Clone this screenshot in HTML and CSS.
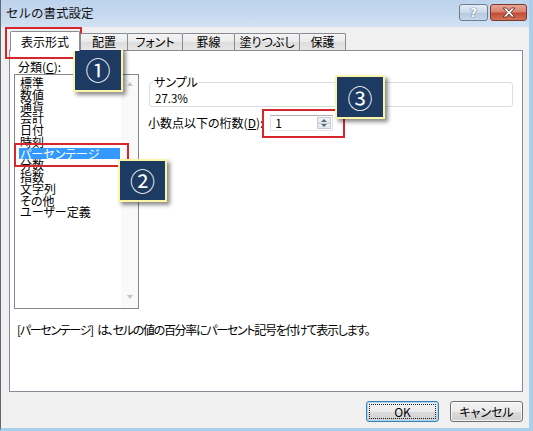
FILE: index.html
```html
<!DOCTYPE html>
<html lang="ja">
<head>
<meta charset="utf-8">
<title>セルの書式設定</title>
<link rel="stylesheet" href="styles.css">
</head>
<body>
<div class="window">
  <div class="titlebar">
    <span class="title">セルの書式設定</span>
    <div class="caption-buttons">
      <div class="cbtn help"><span class="qmark">?</span></div>
      <div class="cbtn close">
        <svg width="16" height="11" viewBox="0 0 16 11"><path d="M2 1h3.5L8 4 10.5 1H14L9.8 5.5 14 10h-3.5L8 7 5.5 10H2l4.2-4.5z" fill="#fff" stroke="#6b2a22" stroke-width="0.9" stroke-linejoin="round"/></svg>
      </div>
    </div>
  </div>
  <div class="body">
    <div class="tabs">
      <div class="tab selected">表示形式</div>
      <div class="tab">配置</div>
      <div class="tab">フォント</div>
      <div class="tab">罫線</div>
      <div class="tab">塗りつぶし</div>
      <div class="tab">保護</div>
    </div>
    <div class="panel">
      <div class="panel-main">
        <div class="left">
          <div class="label">分類(<u>C</u>):</div>
          <div class="listbox">
            <ul class="items">
              <li>標準</li>
              <li>数値</li>
              <li>通貨</li>
              <li>会計</li>
              <li>日付</li>
              <li>時刻</li>
              <li class="active">パーセンテージ</li>
              <li>分数</li>
              <li>指数</li>
              <li>文字列</li>
              <li>その他</li>
              <li>ユーザー定義</li>
            </ul>
            <div class="scrollbar">
              <span class="arrow up"></span>
              <span class="arrow down"></span>
            </div>
          </div>
        </div>
        <div class="right">
          <fieldset class="sample">
            <legend>サンプル</legend>
            <div class="sample-value">27.3%</div>
          </fieldset>
          <div class="decimals">
            <span class="dlabel">小数点以下の桁数(<u>D</u>):</span>
            <div class="spin">
              <span class="spin-value">1</span>
              <div class="spin-btns">
                <span class="sb"><span class="tri up"></span></span>
                <span class="sb"><span class="tri down"></span></span>
              </div>
            </div>
          </div>
        </div>
      </div>
      <p class="desc">[パーセンテージ] は、セルの値の百分率にパーセント記号を付けて表示します。</p>
    </div>
    <div class="buttons">
      <button class="btn default"><span class="focus">OK</span></button>
      <button class="btn">キャンセル</button>
    </div>
  </div>

  <div class="redbox r1"></div>
  <div class="redbox r2"></div>
  <div class="redbox r3"></div>
  <div class="callout c1">①</div>
  <div class="callout c2">②</div>
  <div class="callout c3">③</div>
</div>
</body>
</html>
```

FILE: styles.css
```css
* { box-sizing: border-box; margin: 0; padding: 0; }
html, body { width: 533px; height: 431px; overflow: hidden; }
body {
  font-family: "Noto Sans CJK JP", "Noto Sans", sans-serif;
  font-size: 12px;
  color: #000;
  background: #f0f0f0;
  font-feature-settings: "palt";
}
.window {
  position: relative;
  width: 533px;
  height: 431px;
  background: #f0f0f0;
  border-left: 1px solid #5c6977;
  border-right: 4px solid #a9cfea;
  border-bottom: 3px solid #a9cfea;
  display: flex;
  flex-direction: column;
}
.titlebar {
  height: 27px;
  flex: none;
  display: flex;
  align-items: flex-start;
  justify-content: space-between;
  background: linear-gradient(180deg, #bdd2ec 0%, #c6d9ef 55%, #d3e2f3 100%);
  padding: 0 2px 0 5px;
}
.title {
  font-size: 12.5px;
  line-height: 26px;
  font-feature-settings: normal;
  color: #111;
}
.caption-buttons { display: flex; gap: 2px; padding-top: 4px; }
.cbtn {
  height: 17px;
  border: 1px solid #6f7f93;
  border-radius: 3px;
  display: flex;
  align-items: center;
  justify-content: center;
}
.help {
  width: 29px;
  background: linear-gradient(180deg, #e3ebf5 0%, #cbd9ea 50%, #b6c8df 51%, #c6d6e9 100%);
}
.qmark {
  font-family: "DejaVu Sans", sans-serif;
  font-weight: bold;
  font-size: 12px;
  line-height: 1;
  color: #fff;
  text-shadow: 0 0 1px #4d5f75, 0 0 1px #4d5f75;
}
.close {
  width: 37px;
  border-color: #7a3a30;
  background: linear-gradient(180deg, #e8a596 0%, #d9826f 48%, #c24a33 52%, #d2735a 100%);
}

.body {
  flex: 1;
  display: flex;
  flex-direction: column;
  padding: 4px 6px 0 8px;
}
.tabs {
  display: flex;
  align-items: flex-end;
  height: 20px;
  padding-left: 1px;
  margin-bottom: -1px;
  position: relative;
  z-index: 1;
}
.tab {
  height: 17px;
  margin-bottom: 1px;
  margin-left: -1px;
  border: 1px solid #898c95;
  border-bottom: none;
  border-radius: 2px 2px 0 0;
  background: linear-gradient(180deg, #f4f4f4 0%, #ebebeb 50%, #dcdcdc 51%, #e6e6e6 100%);
  text-align: center;
  line-height: 15px;
  font-size: 12px;
}
.tab.selected {
  height: 20px;
  margin: 0;
  background: #fff;
  line-height: 19px;
  width: 70px;
  position: relative;
  z-index: 2;
}
.tab:nth-child(2) { width: 48px; margin-left: 0; }
.tab:nth-child(3) { width: 56px; }
.tab:nth-child(4) { width: 53px; }
.tab:nth-child(5) { width: 66px; }
.tab:nth-child(6) { width: 47px; }

.panel {
  height: 342px;
  background: #fff;
  border: 1px solid #898c95;
  padding-left: 4px;
}
.panel-main { display: flex; gap: 10px; }
.left { padding-top: 9px; }
.label { padding-left: 4px; line-height: 14px; height: 14px; }
.listbox {
  width: 125px;
  height: 235px;
  border: 1px solid #828790;
  display: flex;
  padding: 2px 0 0 4px;
}
.items {
  list-style: none;
  width: 101px;
  margin-right: 1px;
  font-size: 12px;
}
.items li {
  line-height: 11.75px;
  height: 11.75px;
  padding-left: 1px;
  white-space: nowrap;
  overflow: visible;
}
.items li.active { background: #3399ff; color: #fff; }
.scrollbar {
  width: 17px;
  margin-top: -2px;
  background: #f9f9f9;
  display: flex;
  flex-direction: column;
  justify-content: space-between;
  align-items: center;
  padding: 7px 0 9px;
}
.arrow { width: 0; height: 0; border-left: 3.5px solid transparent; border-right: 3.5px solid transparent; }
.arrow.up { border-bottom: 4px solid #c2c4c8; }
.arrow.down { border-top: 4px solid #c2c4c8; }

.right { padding-top: 24px; }
.sample {
  width: 364px;
  border: 1px solid #d5dfe5;
  border-radius: 3px;
  padding: 0 3px 1px;
}
.sample legend { padding: 0 1px; line-height: 14px; }
.sample-value { padding: 2px 0 0 2px; line-height: 14px; font-size: 11.5px; }
.decimals {
  display: flex;
  align-items: center;
  gap: 7px;
  margin-top: 8px;
  margin-left: -1px;
}
.dlabel { line-height: 16px; }
.spin {
  width: 63px;
  height: 16px;
  border: 1px solid #abadb3;
  border-color: #abadb3 #dbdfe6 #e3e9ef #e2e3ea;
  display: flex;
  justify-content: space-between;
}
.spin-value { padding-left: 4px; line-height: 14px; font-size: 12px; }
.spin-btns { width: 15px; display: flex; flex-direction: column; padding: 1px 1px 1px 0; }
.sb {
  flex: 1;
  display: flex;
  align-items: center;
  justify-content: center;
  background: linear-gradient(180deg, #f2f4f7, #dfe5ec);
  border: 1px solid #c5ccd6;
}
.sb + .sb { border-top: none; }
.tri { width: 0; height: 0; border-left: 3px solid transparent; border-right: 3px solid transparent; }
.tri.up { border-bottom: 3px solid #5b6a7d; }
.tri.down { border-top: 3px solid #5b6a7d; }

.desc {
  margin-top: 14px;
  padding-left: 3px;
  line-height: 14px;
  font-size: 12px;
  letter-spacing: -1.3px;
  word-spacing: 3px;
  white-space: nowrap;
}

.buttons {
  display: flex;
  justify-content: flex-end;
  gap: 11px;
  margin-top: 9px;
}
.btn {
  width: 73px;
  height: 21px;
  font-family: inherit;
  font-size: 12px;
  font-feature-settings: "palt";
  color: #000;
  border: 1px solid #707070;
  border-radius: 3px;
  background: linear-gradient(180deg, #f2f2f2 0%, #ebebeb 50%, #dddddd 51%, #cfcfcf 100%);
  box-shadow: inset 0 0 0 1px rgba(255,255,255,0.7);
  display: flex;
  align-items: center;
  justify-content: center;
  padding: 2px;
}
.btn.default {
  border-color: #3c7fb1;
  box-shadow: inset 0 0 0 1px #a5d9f5;
}
.focus {
  width: 100%;
  height: 100%;
  border: 1px dotted #222;
  display: flex;
  align-items: center;
  justify-content: center;
  line-height: 1;
}

.redbox {
  position: absolute;
  border: 2px solid #d8262d;
}
.r1 { left: 4px; top: 27px; width: 77px; height: 32px; }
.r2 { left: 13px; top: 143px; width: 115px; height: 24px; }
.r3 { left: 261px; top: 109px; width: 83px; height: 29px; }

.callout {
  position: absolute;
  background: #1d3a62;
  border: 2px solid #faf6a6;
  box-shadow: 3px 3px 4px rgba(0,0,0,0.45);
  color: #fff;
  font-size: 25px;
  line-height: 1;
  display: flex;
  align-items: center;
  justify-content: center;
  font-feature-settings: normal;
}
.c1 { left: 72px; top: 47px; width: 50px; height: 45px; }
.c2 { left: 117px; top: 159px; width: 49px; height: 43px; }
.c3 { left: 334px; top: 75px; width: 50px; height: 44px; }
```
